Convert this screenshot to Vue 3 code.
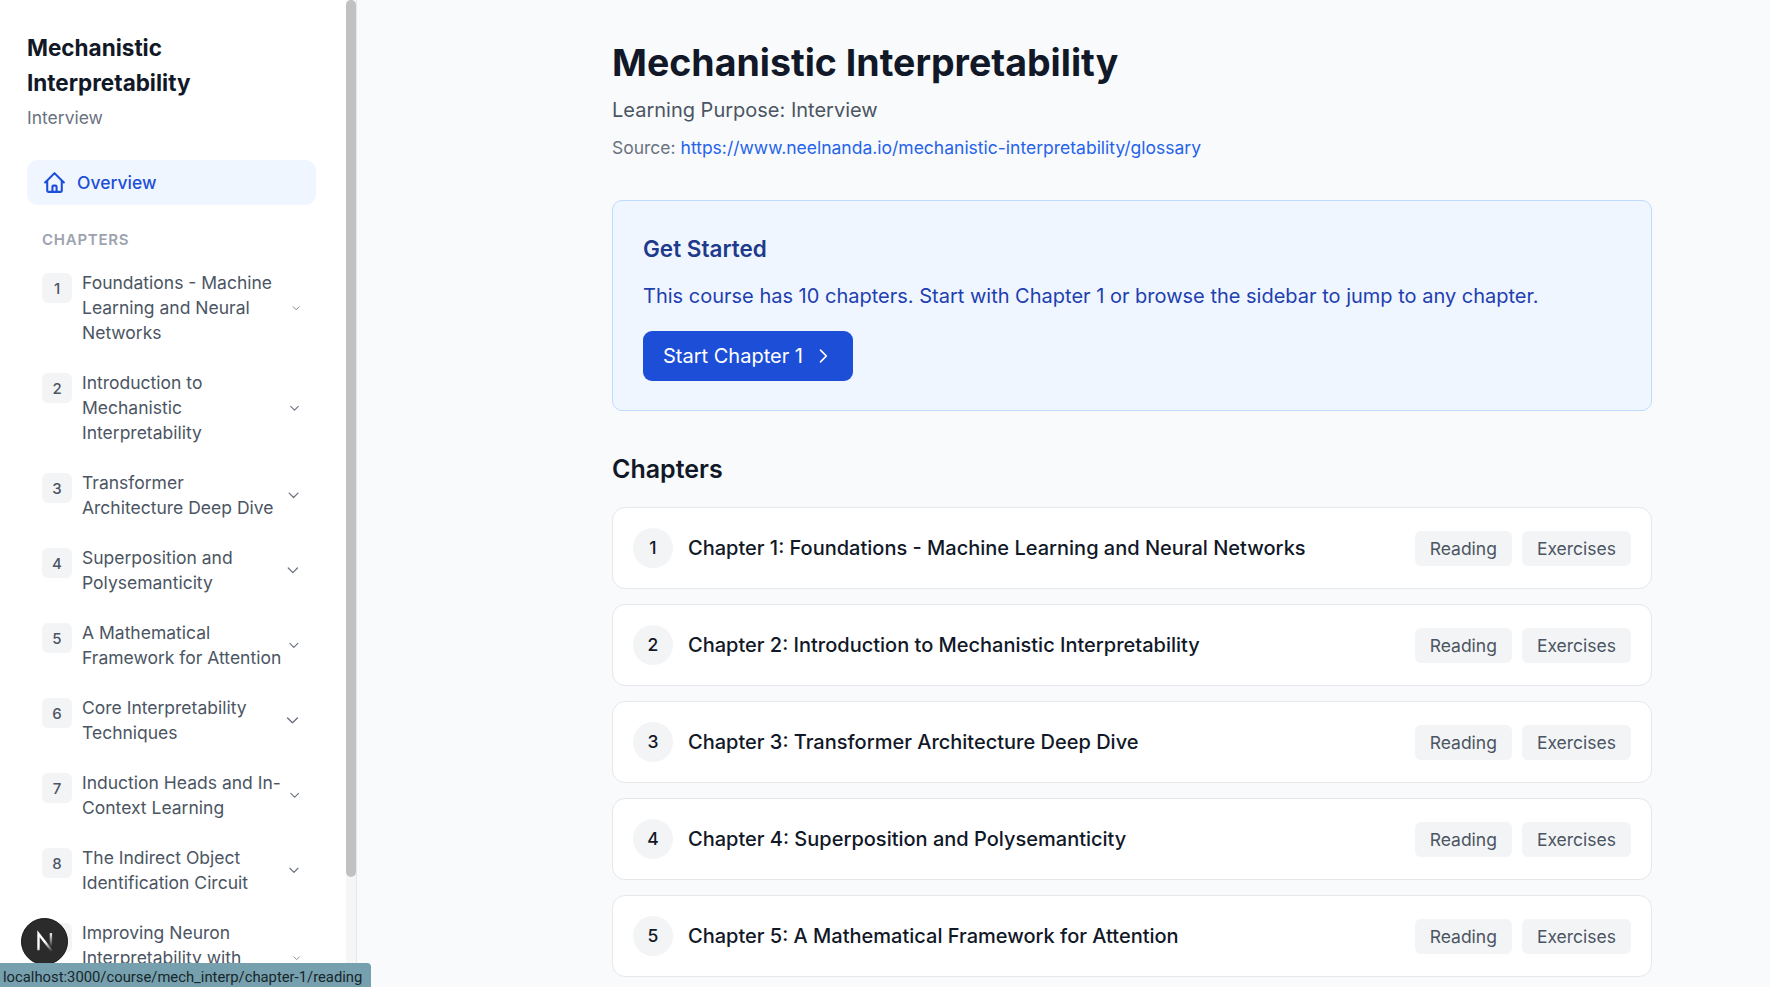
<script setup>
const chapters = [
  'Foundations - Machine Learning and Neural Networks',
  'Introduction to Mechanistic Interpretability',
  'Transformer Architecture Deep Dive',
  'Superposition and Polysemanticity',
  'A Mathematical Framework for Attention',
  'Core Interpretability Techniques',
  'Induction Heads and In-Context Learning',
  'The Indirect Object Identification Circuit',
  'Improving Neuron Interpretability with Sparse Autoencoders'
]
const visibleCards = chapters.slice(0, 5)
</script>

<template>
  <div class="app">
    <aside class="sidebar">
      <div class="side-scroll">
        <h2 class="course-title">Mechanistic Interpretability</h2>
        <p class="course-purpose">Interview</p>

        <a class="overview">
          <svg class="home" viewBox="0 0 24 24" fill="none" stroke="currentColor" stroke-width="2" stroke-linecap="round" stroke-linejoin="round">
            <path d="M3 12l2-2m0 0l7-7 7 7M5 10v10a1 1 0 001 1h3m10-11l2 2m-2-2v10a1 1 0 01-1 1h-3m-6 0a1 1 0 001-1v-4a1 1 0 011-1h2a1 1 0 011 1v4a1 1 0 001 1m-6 0h6" />
          </svg>
          <span>Overview</span>
        </a>

        <div class="section-label">CHAPTERS</div>

        <ul class="side-list">
          <li v-for="(title, i) in chapters" :key="title" class="side-item">
            <span class="side-num">{{ i + 1 }}</span>
            <span class="side-text">{{ title }}</span>
            <svg class="chev" viewBox="0 0 24 24" fill="none" stroke="currentColor" stroke-width="2" stroke-linecap="round" stroke-linejoin="round">
              <path d="M19 9l-7 7-7-7" />
            </svg>
          </li>
        </ul>
      </div>
      <div class="scroll-track">
        <div class="scroll-thumb"></div>
      </div>
    </aside>

    <main class="main">
      <div class="content">
        <h1 class="page-title">Mechanistic Interpretability</h1>
        <p class="purpose">Learning Purpose: Interview</p>
        <p class="source">Source: <a class="source-link">https://www.neelnanda.io/mechanistic-interpretability/glossary</a></p>

        <section class="start-box">
          <h3 class="start-title">Get Started</h3>
          <p class="start-text">This course has 10 chapters. Start with Chapter 1 or browse the sidebar to jump to any chapter.</p>
          <a class="start-btn">
            <span>Start Chapter 1</span>
            <svg class="btn-chev" viewBox="0 0 24 24" fill="none" stroke="currentColor" stroke-width="2" stroke-linecap="round" stroke-linejoin="round">
              <path d="M9 5l7 7-7 7" />
            </svg>
          </a>
        </section>

        <h2 class="chapters-title">Chapters</h2>
        <div class="cards">
          <div v-for="(title, i) in visibleCards" :key="title" class="card">
            <span class="card-num">{{ i + 1 }}</span>
            <span class="card-title">Chapter {{ i + 1 }}: {{ title }}</span>
            <a class="tag">Reading</a>
            <a class="tag">Exercises</a>
          </div>
        </div>
      </div>
    </main>

    <!-- next.js dev indicator -->
    <div class="next-badge">
      <svg width="26" height="26" viewBox="0 0 22 22" fill="none">
        <defs>
          <linearGradient id="nfade" x1="5" y1="3" x2="17" y2="19" gradientUnits="userSpaceOnUse">
            <stop offset="0.5" stop-color="#fff" />
            <stop offset="1" stop-color="#fff" stop-opacity="0" />
          </linearGradient>
          <linearGradient id="nside" x1="16" y1="3" x2="16" y2="15" gradientUnits="userSpaceOnUse">
            <stop offset="0" stop-color="#fff" />
            <stop offset="1" stop-color="#fff" stop-opacity="0" />
          </linearGradient>
        </defs>
        <path d="M5.5 18V4L17.5 19.5" stroke="url(#nfade)" stroke-width="2" />
        <path d="M16 3.5V15" stroke="url(#nside)" stroke-width="2" />
      </svg>
    </div>

    <!-- browser status bubble -->
    <div class="status">localhost:3000/course/mech_interp/chapter-1/reading</div>
  </div>
</template>

<style>
html, body {
  margin: 0;
  background: #f9fafb;
}
</style>

<style scoped>
* {
  box-sizing: border-box;
}

.app {
  position: relative;
  display: flex;
  width: 100%;
  height: 100vh;
  overflow: hidden;
  font-family: Inter, "Noto Sans", sans-serif;
  color: #111827;
}

.sidebar {
  flex: none;
  display: flex;
  width: 357px;
  height: 100%;
  background: #fff;
  border-right: 1px solid #e5e7eb;
}
.side-scroll {
  flex: 1;
  min-width: 0;
  height: 100%;
  padding: 30px 30px 0 27px;
  overflow: hidden;
}
.scroll-track {
  flex: none;
  width: 10px;
  height: 100%;
  background: #f6f6f6;
}
.scroll-thumb {
  height: 877px;
  border-radius: 5px;
  background: #c1c1c1;
}

.course-title {
  margin: 0;
  font-size: 22.5px;
  line-height: 35px;
  font-weight: 700;
  color: #111827;
}
.course-purpose {
  margin: 5px 0 0;
  font-size: 17.5px;
  line-height: 26px;
  color: #6b7280;
}

.overview {
  display: flex;
  align-items: center;
  gap: 10px;
  height: 45px;
  margin-top: 29px;
  padding: 0 15px;
  border-radius: 11px;
  background: #eff6ff;
  color: #1d4ed8;
  font-size: 17.5px;
  font-weight: 500;
}
.home {
  width: 25px;
  height: 25px;
  flex: none;
}

.section-label {
  margin-top: 26px;
  padding-left: 15px;
  font-size: 15px;
  line-height: 18px;
  font-weight: 600;
  letter-spacing: 0.75px;
  color: #9ca3af;
}

.side-list {
  list-style: none;
  margin: 21px 0 0;
  padding: 0 15px;
  display: flex;
  flex-direction: column;
  gap: 25px;
}
.side-item {
  display: flex;
  align-items: center;
}
.side-num {
  flex: none;
  align-self: flex-start;
  width: 30px;
  height: 30px;
  margin: 3px 10px 0 0;
  display: flex;
  align-items: center;
  justify-content: center;
  border-radius: 6px;
  background: #f3f4f6;
  font-size: 15px;
  font-weight: 500;
  color: #4b5563;
}
.side-text {
  font-size: 17.5px;
  line-height: 25px;
  color: #4b5563;
}
.chev {
  width: 22.5px;
  height: 20px;
  margin-left: 3px;
  color: #6b7280;
}

.main {
  flex: 1;
  min-width: 0;
  height: 100%;
  overflow: hidden;
  background: #f9fafb;
  padding: 37px 0 0 255px;
}
.content {
  width: 1040px;
}

.page-title {
  margin: 0;
  font-size: 37.5px;
  line-height: 52px;
  font-weight: 700;
  color: #111827;
}
.purpose {
  margin: 6.5px 0 0;
  font-size: 20px;
  line-height: 28px;
  color: #4b5563;
}
.source {
  margin: 10.5px 0 0;
  font-size: 17.5px;
  line-height: 27px;
  color: #6b7280;
}
.source-link {
  color: #2563eb;
}

.start-box {
  margin-top: 39px;
  padding: 31.5px 30px 0;
  height: 211px;
  border: 1px solid #bfdbfe;
  border-radius: 10px;
  background: #eff6ff;
}
.start-title {
  margin: 0;
  font-size: 22.5px;
  line-height: 32px;
  font-weight: 600;
  color: #1e3a8a;
}
.start-text {
  margin: 15px 0 0;
  font-size: 20px;
  line-height: 32px;
  color: #1e40af;
}
.start-btn {
  display: flex;
  align-items: center;
  justify-content: space-between;
  width: 210px;
  height: 50px;
  margin-top: 19.7px;
  padding: 0 20px;
  border-radius: 9px;
  background: #1d4ed8;
  color: #fff;
  font-size: 20px;
  font-weight: 400;
  white-space: nowrap;
}
.btn-chev {
  width: 20px;
  height: 20px;
  flex: none;
}

.chapters-title {
  margin: 40px 0 0;
  font-size: 25px;
  line-height: 36px;
  font-weight: 600;
  color: #111827;
}
.cards {
  margin-top: 20px;
  display: flex;
  flex-direction: column;
  gap: 15.5px;
}
.card {
  display: flex;
  align-items: center;
  height: 81.5px;
  padding: 0 20px;
  border: 1px solid #e5e7eb;
  border-radius: 13px;
  background: #fff;
}
.card-num {
  flex: none;
  width: 40px;
  height: 40px;
  display: flex;
  align-items: center;
  justify-content: center;
  border-radius: 50%;
  background: #f3f4f6;
  font-size: 17.5px;
  font-weight: 500;
  color: #111827;
}
.card-title {
  flex: 1;
  margin-left: 15px;
  font-size: 20px;
  font-weight: 500;
  color: #111827;
}
.tag {
  flex: none;
  height: 35px;
  margin: 1.5px 0 0 10px;
  padding: 0 15px;
  display: flex;
  align-items: center;
  border-radius: 6px;
  background: #f3f4f6;
  font-size: 17.5px;
  color: #4b5563;
}

.next-badge {
  position: absolute;
  left: 21px;
  top: 918px;
  width: 47px;
  height: 47px;
  display: flex;
  align-items: center;
  justify-content: center;
  border-radius: 50%;
  background: #2b2b2b;
  border: 1.5px solid #151515;
}

.status {
  position: absolute;
  left: 0;
  bottom: 0;
  width: 371px;
  height: 24px;
  padding: 2px 0 0 3px;
  line-height: 24px;
  border-top-right-radius: 4px;
  background: #76a0ad;
  color: #16262c;
  font-family: Roboto, sans-serif;
  font-size: 14.8px;
  white-space: nowrap;
  overflow: hidden;
}
</style>
